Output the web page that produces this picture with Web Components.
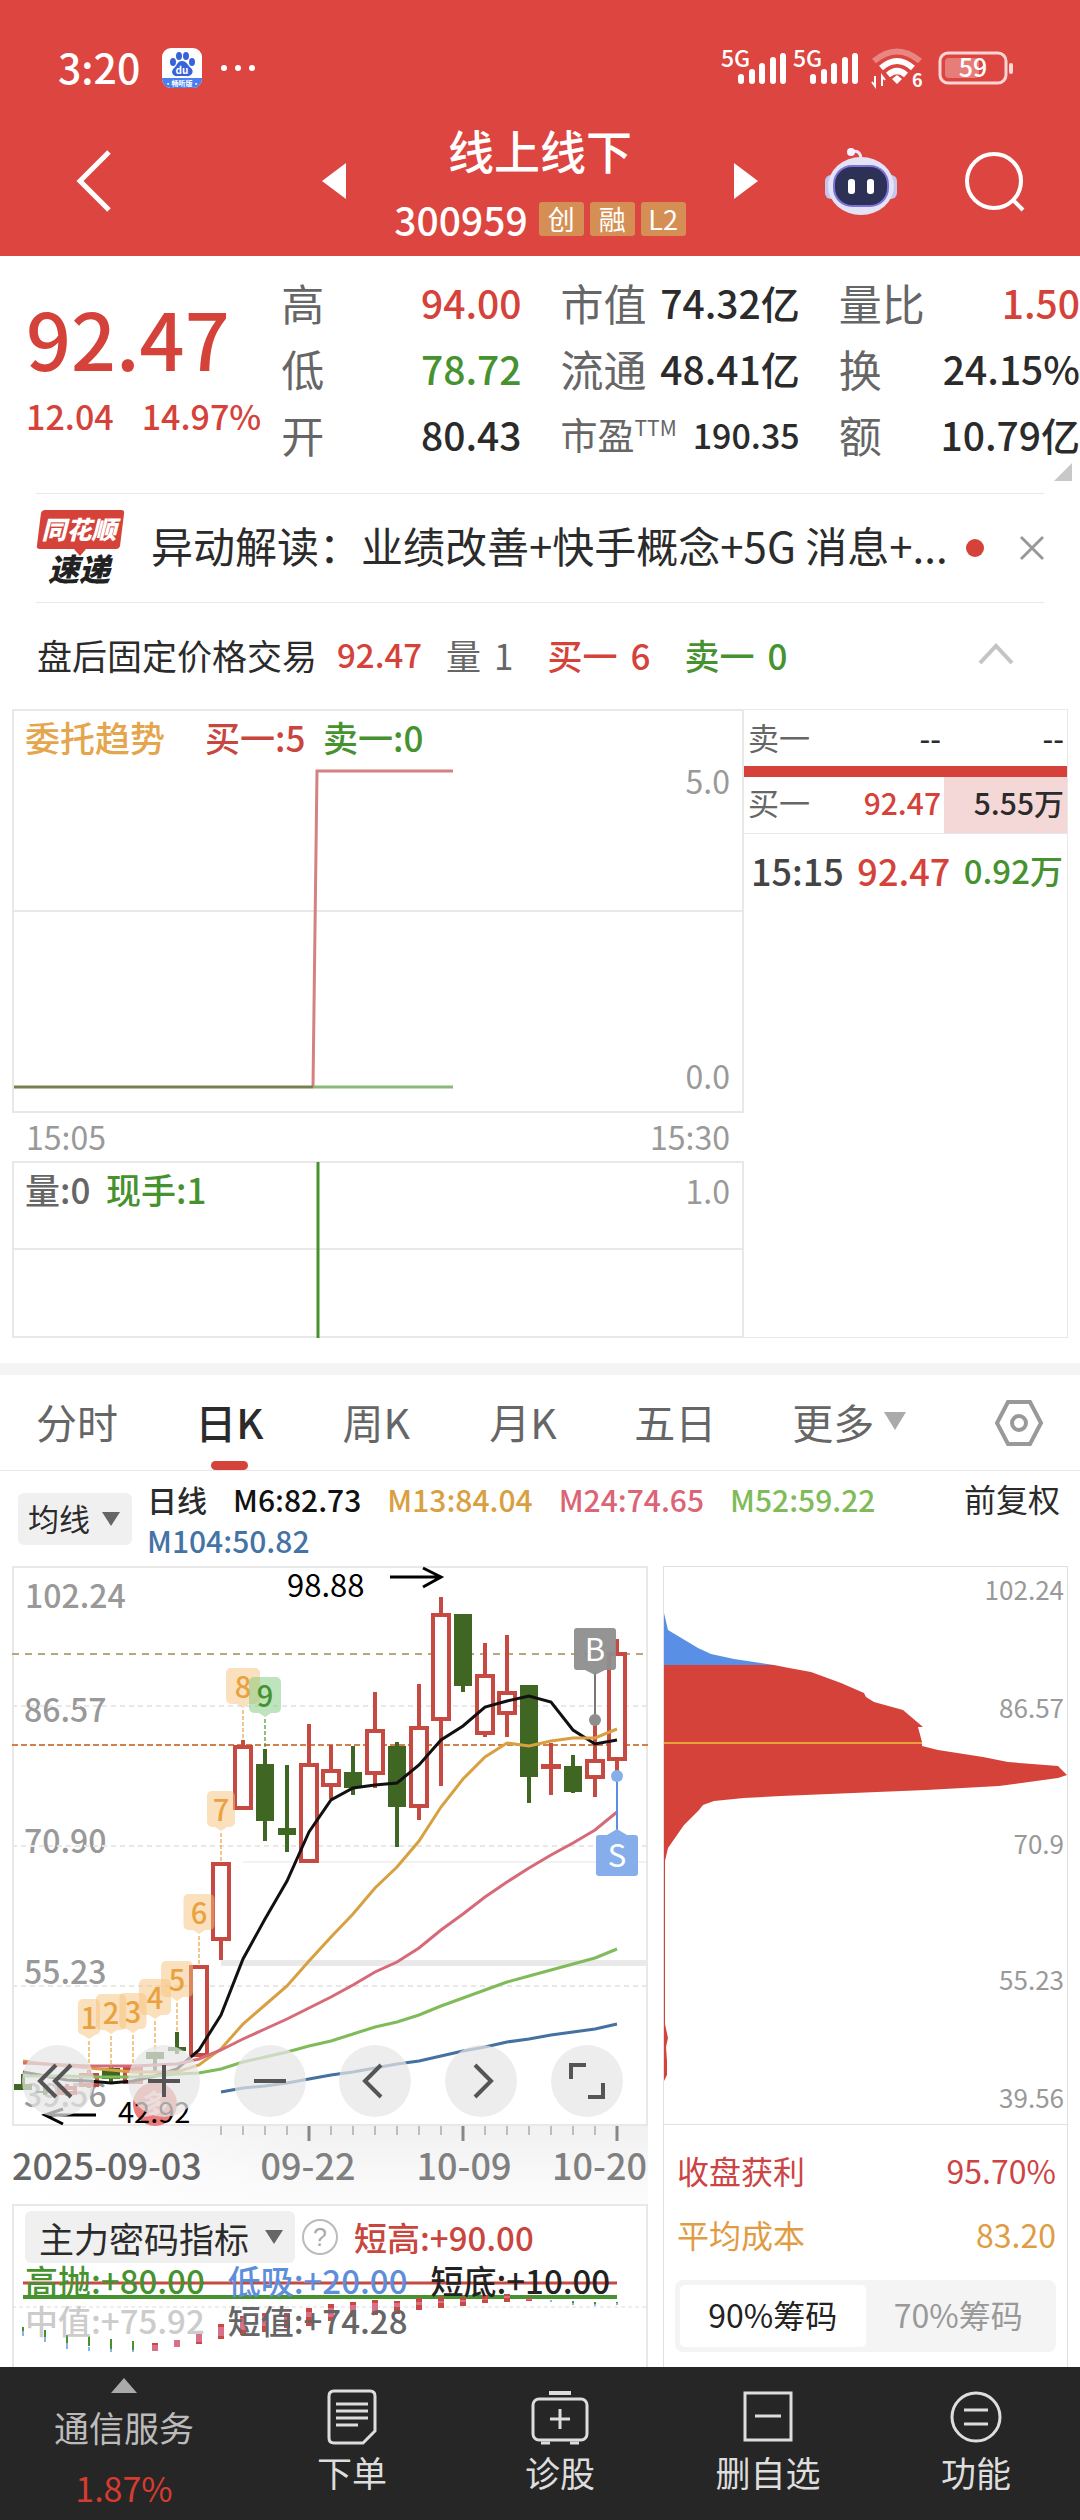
<!DOCTYPE html>
<html lang="zh-CN">
<head>
<meta charset="utf-8">
<meta name="viewport" content="width=device-width, initial-scale=1">
<title>线上线下 300959</title>
<style>
  body {
    margin: 0;
    min-height: 100vh;
    display: flex;
    flex-direction: column;
    background: #fff;
    color: #2b2b2b;
    font-family: "Noto Sans CJK SC", "Noto Sans", sans-serif;
    --red: #d5423a;
    --green: #45922f;
    --gray: #666;
    --line: #e8e8e8;
  }
  main { flex: 1; }
</style>
</head>
<body>
<status-bar time="3:20" battery="59"></status-bar>
<stock-nav name="线上线下" code="300959">
  <span slot="tag">创</span>
  <span slot="tag">融</span>
  <span slot="tag">L2</span>
</stock-nav>
<main>
  <quote-board price="92.47" change="12.04" percent="14.97%"></quote-board>
  <news-strip>异动解读：业绩改善+快手概念+5G 消息+...</news-strip>
  <after-hours></after-hours>
  <order-trend></order-trend>
  <period-tabs></period-tabs>
  <ma-legend></ma-legend>
  <chart-area>
    <k-chart></k-chart>
    <date-axis></date-axis>
    <indicator-chart></indicator-chart>
    <chip-panel slot="side"></chip-panel>
  </chart-area>
</main>
<bottom-nav>
  <bottom-item label="下单">
    <svg width="50" height="56" viewBox="0 0 50 56" fill="none" stroke="#ddd" stroke-width="3"><path d="M7 2H43Q48 2 48 7V42L36 54H7Q2 54 2 49V7Q2 2 7 2Z"/><path d="M9 15H41M9 22H41M9 29H41M9 36H31"/></svg>
  </bottom-item>
  <bottom-item label="诊股">
    <svg width="58" height="56" viewBox="0 0 58 56" fill="none" stroke="#ddd" stroke-width="3"><path d="M18 4H40" stroke-width="4"/><rect x="2" y="10" width="54" height="41" rx="6"/><path d="M29 20V40M19 30H39M10 54H19M39 54H48"/></svg>
  </bottom-item>
  <bottom-item label="删自选">
    <svg width="50" height="56" viewBox="0 0 50 56" fill="none" stroke="#ddd" stroke-width="3"><rect x="2" y="4" width="46" height="47"/><path d="M12 27H38"/></svg>
  </bottom-item>
  <bottom-item label="功能">
    <svg width="52" height="56" viewBox="0 0 52 56" fill="none" stroke="#ddd" stroke-width="3"><circle cx="26" cy="28" r="24"/><path d="M14 21H38M14 35H38"/></svg>
  </bottom-item>
</bottom-nav>

<script>
// registers an element whose shadow root is filled by render(host)
function define(name, render) {
  customElements.define(name, class extends HTMLElement {
    constructor() {
      super();
      this.attachShadow({ mode: "open" }).innerHTML = render(this);
    }
  });
}

const attr = (el, name) => el.getAttribute(name) || "";

define("status-bar", el => `
  <style>
    :host {
      display: flex; align-items: center; height: 40px; padding: 48px 66px 32px 58px;
      background: #dd4540; color: #fff;
    }
    time { font-size: 41px; font-weight: 500; line-height: 40px; padding-bottom: 4px; margin-right: 22px; }
    .more { margin-left: 18px; }
    .right { margin-left: auto; }
    svg { display: block; overflow: visible; }
  </style>
  <time>${attr(el, "time")}</time>
  <svg width="40" height="40" viewBox="0 0 40 40">
    <defs><clipPath id="app"><rect width="40" height="40" rx="9"/></clipPath></defs>
    <g clip-path="url(#app)">
      <rect width="40" height="40" fill="#fff"/>
      <rect y="30" width="40" height="10" fill="#4a80ee"/>
      <g fill="#3763d8">
        <ellipse cx="11" cy="14" rx="3" ry="4"/><ellipse cx="17" cy="8" rx="3" ry="4"/>
        <ellipse cx="24" cy="8" rx="3" ry="4"/><ellipse cx="30" cy="14" rx="3" ry="4"/>
        <path d="M20 13C25 13 26 18 29 20C33 24 29 29 24 28H16C11 29 8 24 12 20C15 18 15 13 20 13Z"/>
      </g>
      <text x="20" y="26" font-size="10" font-weight="700" fill="#fff" text-anchor="middle">du</text>
      <text x="20" y="38" font-size="7" font-weight="700" fill="#fff" text-anchor="middle">·畅听版·</text>
    </g>
  </svg>
  <svg class="more" width="36" height="40" fill="#fff"><circle cx="4" cy="20" r="3"/><circle cx="18" cy="20" r="3"/><circle cx="32" cy="20" r="3"/></svg>
  <svg class="right" width="293" height="40" viewBox="0 0 293 40" fill="#fff">
    ${[0, 72].map(x => `
      <text x="${x}" y="19" font-size="23" font-weight="500">5G</text>
      <path stroke="#fff" stroke-width="6" stroke-linecap="round" d="M${x + 20} 33V29M${x + 31} 33V24M${x + 41} 33V18M${x + 52} 33V12M${x + 62} 33V8"/>`).join("")}
    <g fill="none" stroke="#fff" stroke-width="6">
      <path d="M153 13Q176-6 199 13" opacity=".35"/>
      <path d="M160 20Q176 6 192 20"/>
      <path d="M167 27Q176 19 185 27"/>
    </g>
    <path d="M171 31L176 36L181 31L176 27Z"/>
    <path d="M154 28V38L151 34M161 38V28L164 32" fill="none" stroke="#fff" stroke-width="2"/>
    <text x="191" y="39" font-size="18" font-weight="700">6</text>
    <rect x="219" y="5" width="66" height="30" rx="8" fill="none" stroke="#fbd5d3" stroke-width="3"/>
    <rect x="224" y="10" width="34" height="20" rx="4" opacity=".3"/>
    <rect x="288" y="15" width="4" height="11" rx="2" opacity=".8"/>
    <text x="252" y="29" font-size="25" font-weight="500" text-anchor="middle">${attr(el, "battery")}</text>
  </svg>
`);

define("stock-nav", el => `
  <style>
    :host {
      display: grid; grid-template-columns: 1fr auto 1fr; align-items: center;
      height: 120px; padding: 0 54px 16px; background: #dd4540; color: #fff;
    }
    button { border: 0; padding: 0; background: none; display: block; }
    svg { display: block; }
    .left { display: flex; justify-content: space-between; align-items: center; padding: 0 48px 0 22px; }
    .right { display: flex; justify-content: space-between; align-items: center; padding-left: 48px; }
    .tools { display: flex; gap: 67px; align-items: center; }
    .center { display: flex; flex-direction: column; align-items: center; gap: 22px; padding-bottom: 4px; }
    h1 { margin: 0; font-size: 46px; font-weight: 500; line-height: 58px; }
    .code { display: flex; align-items: center; gap: 6px; font-size: 39px; font-weight: 500; line-height: 38px; }
    .code b { font-weight: 500; margin-right: 5px; }
    ::slotted(span) {
      background: #d58f55; border-radius: 3px; min-width: 45px; text-align: center;
      font-size: 27px; font-weight: 400; line-height: 34px;
    }
  </style>
  <div class="left">
    <button aria-label="返回"><svg width="36" height="64" fill="none" stroke="#fff" stroke-width="5"><path d="M33 3L4 32L33 61"/></svg></button>
    <button aria-label="上一只"><svg width="24" height="36" fill="#fff"><path d="M24 0V36L0 18Z"/></svg></button>
  </div>
  <div class="center">
    <h1>${attr(el, "name")}</h1>
    <div class="code"><b>${attr(el, "code")}</b><slot name="tag"></slot></div>
  </div>
  <div class="right">
    <button aria-label="下一只"><svg width="24" height="36" fill="#fff"><path d="M0 0V36L24 18Z"/></svg></button>
    <div class="tools">
      <button aria-label="智能助手">
        <svg width="72" height="68" viewBox="0 0 72 68">
          <path d="M26 5Q36 2 36 13" fill="none" stroke="#e8e6f6" stroke-width="3"/>
          <circle cx="26" cy="5" r="4" fill="#f4f2ff"/>
          <rect x="0" y="28" width="12" height="24" rx="6" fill="#c5c5ee"/>
          <rect x="60" y="28" width="12" height="24" rx="6" fill="#c5c5ee"/>
          <ellipse cx="36" cy="39" rx="33" ry="29" fill="#e4e3f6"/>
          <rect x="8" y="18" width="56" height="42" rx="19" fill="#7d72dc"/>
          <rect x="10" y="20" width="52" height="38" rx="17" fill="#2c3155"/>
          <rect x="23" y="32" width="7" height="15" rx="3" fill="#fff"/>
          <rect x="42" y="32" width="7" height="15" rx="3" fill="#fff"/>
        </svg>
      </button>
      <button aria-label="搜索"><svg width="62" height="62" fill="none" stroke="#fff" stroke-width="4"><circle cx="30" cy="31" r="27"/><path d="M49 50L59 60"/></svg></button>
    </div>
  </div>
`);

define("quote-board", el => `
  <style>
    :host {
      display: grid; grid-template-columns: 216fr 240fr 239fr 241fr; column-gap: 39px;
      padding: 13px 0 26px 26px; position: relative; color: #2b2b2b;
    }
    .last { color: var(--red); padding-top: 12px; min-width: 0; white-space: nowrap; }
    .price { font-size: 79px; font-weight: 500; line-height: 112px; }
    .chg { font-size: 34px; line-height: 46px; display: flex; gap: 28px; font-weight: 500; }
    dl { margin: 0; min-width: 0; }
    dl div { display: flex; justify-content: space-between; align-items: center; height: 66px; white-space: nowrap; }
    dt { font-size: 43px; color: var(--gray); }
    dt.s { font-size: 37px; display: flex; align-items: center; }
    sup { font-size: 21px; line-height: 20px; align-self: flex-start; padding-top: 10px; }
    dd { margin: 0; font-size: 39px; font-weight: 500; }
    dd.s { font-size: 34px; }
    .up { color: var(--red); }
    .down { color: var(--green); }
    .corner { position: absolute; right: 8px; bottom: 12px; }
  </style>
  <div class="last">
    <div class="price">${attr(el, "price")}</div>
    <div class="chg"><span>${attr(el, "change")}</span><span>${attr(el, "percent")}</span></div>
  </div>
  <dl>
    <div><dt>高</dt><dd class="up">94.00</dd></div>
    <div><dt>低</dt><dd class="down">78.72</dd></div>
    <div><dt>开</dt><dd>80.43</dd></div>
  </dl>
  <dl>
    <div><dt>市值</dt><dd>74.32亿</dd></div>
    <div><dt>流通</dt><dd>48.41亿</dd></div>
    <div><dt class="s">市盈<sup>TTM</sup></dt><dd class="s">190.35</dd></div>
  </dl>
  <dl>
    <div><dt>量比</dt><dd class="up">1.50</dd></div>
    <div><dt>换</dt><dd>24.15%</dd></div>
    <div><dt>额</dt><dd>10.79亿</dd></div>
  </dl>
  <svg class="corner" width="18" height="18"><path d="M18 0V18H0Z" fill="#c8c8c8"/></svg>
`);

define("news-strip", () => `
  <style>
    :host {
      display: flex; align-items: center; margin: 0 36px; height: 108px;
      border: solid var(--line); border-width: 1px 0;
    }
    a { flex: 1; color: #2b2b2b; text-decoration: none; font-size: 42px; line-height: 60px; padding-bottom: 6px; white-space: nowrap; margin-left: 25px; }
    button { border: 0; background: none; padding: 0; margin-left: 36px; }
    svg { display: block; overflow: visible; }
    i { width: 18px; height: 18px; border-radius: 50%; background: var(--red); }
  </style>
  <svg width="90" height="76" viewBox="0 0 90 76">
    <path d="M9 0H85Q89 0 88 4L84 36Q83 39 80 39H50L44 46L38 39H4Q0 39 1 35L5 3Q6 0 9 0Z" fill="#d5423a"/>
    <g font-weight="900" text-anchor="middle">
      <text x="43" y="29" font-size="25" font-style="italic" fill="#fff">同花顺</text>
      <text x="43" y="71" font-size="31" font-style="italic" fill="#222">速递</text>
    </g>
  </svg>
  <a href="#news"><slot></slot></a>
  <i></i>
  <button aria-label="关闭"><svg width="24" height="24" stroke="#999" stroke-width="3"><path d="M1 1L23 23M23 1L1 23"/></svg></button>
`);

define("after-hours", () => `
  <style>
    :host {
      display: flex; align-items: center; height: 102px; padding: 0 66px 4px 37px;
      font-size: 35px; white-space: nowrap;
    }
    b { font-size: 33px; font-weight: 500; color: var(--red); margin: 0 24px 0 20px; }
    span { display: flex; gap: 13px; }
    i { font-style: normal; }
    .vol { color: var(--gray); margin-right: 34px; }
    .buy { color: var(--red); margin-right: 34px; font-weight: 500; }
    .sell { color: var(--green); font-weight: 500; }
    button { margin-left: auto; border: 0; background: none; padding: 0; }
    svg { display: block; }
  </style>
  <span>盘后固定价格交易</span>
  <b>92.47</b>
  <span class="vol"><i>量</i>1</span>
  <span class="buy"><i>买一</i>6</span>
  <span class="sell"><i>卖一</i>0</span>
  <button aria-label="收起"><svg width="36" height="22" fill="none" stroke="#c4c4c4" stroke-width="4"><path d="M2 20L18 3L34 20"/></svg></button>
`);

define("order-trend", () => `
  <style>
    :host {
      display: grid; grid-template-columns: 732fr 324fr; padding: 0 12px 25px;
      border-bottom: 12px solid #f4f4f4;
    }
    svg { display: block; width: 100%; }
    .book { border: 1px solid var(--line); border-left: 0; }
    table { width: 100%; border-collapse: collapse; font-size: 30px; }
    td { padding: 0 3px 6px 4px; text-align: right; line-height: 50px; font-weight: 500; }
    tr:first-child td { padding-bottom: 2px; line-height: 54px; }
    td:first-child { text-align: left; color: var(--gray); font-size: 31px; font-weight: 400; }
    tr.bar td { padding: 0; height: 11px; line-height: 0; background: var(--red); }
    .pink { background: #f4d7d7; width: 116px; }
    .up { color: var(--red); }
    .deal {
      display: flex; justify-content: space-between; align-items: center; padding: 0 4px 0 7px; height: 72px;
      border-top: 1px solid var(--line); font-size: 36px; color: #444; font-weight: 500;
    }
    .deal small { font-size: 33px; color: var(--green); }
  </style>
  <svg viewBox="0 0 732 629">
    <g fill="none" stroke="#e8e8e8" stroke-width="2">
      <path d="M1 1H731V403H1ZM1 202H731M1 453H731V628H1ZM1 540H731"/>
    </g>
    <path d="M301 378H441" fill="none" stroke="#8bb87b" stroke-width="3"/>
    <path d="M301 378L305 62H441" fill="none" stroke="#d5817e" stroke-width="3"/>
    <path d="M2 378H301" stroke="#76814c" stroke-width="3"/>
    <path d="M306 453V629" stroke="#45922f" stroke-width="3"/>
    <g font-size="35" font-weight="500">
      <text x="13" y="43" fill="#e5a54c">委托趋势</text>
      <text x="193" y="43" fill="#c9463f">买一:5</text>
      <text x="311" y="43" fill="#45922f">卖一:0</text>
      <text x="13" y="495" fill="#666">量:0</text>
      <text x="94" y="495" fill="#45922f">现手:1</text>
    </g>
    <g font-size="32" fill="#999" text-anchor="end">
      <text x="718" y="85">5.0</text>
      <text x="718" y="380">0.0</text>
      <text x="718" y="441">15:30</text>
      <text x="718" y="495">1.0</text>
      <text x="14" y="441" text-anchor="start">15:05</text>
    </g>
  </svg>
  <div class="book">
    <table>
      <tr><td>卖一</td><td>--</td><td>--</td></tr>
      <tr class="bar"><td colspan="3"></td></tr>
      <tr><td>买一</td><td class="up">92.47</td><td class="pink">5.55万</td></tr>
    </table>
    <div class="deal"><span>15:15</span><span class="up">92.47</span><small>0.92万</small></div>
  </div>
`);

define("period-tabs", () => `
  <style>
    :host {
      display: flex; justify-content: space-between; align-items: center; height: 95px;
      padding: 0 36px; border-bottom: 1px solid var(--line);
    }
    button {
      position: relative; border: 0; background: none; padding: 0 0 4px; height: 95px; min-width: 71px; color: var(--gray);
      font: 400 41px/90px "Noto Sans CJK SC", sans-serif; display: flex; align-items: center; justify-content: center; gap: 10px;
    }
    button:last-child { margin-left: 12px; min-width: 0; padding: 0; }
    .on { color: #2b2b2b; font-weight: 500; }
    .on::after {
      content: ""; position: absolute; left: 17px; right: 17px; bottom: 0; height: 9px;
      border-radius: 5px; background: var(--red);
    }
  </style>
  <button>分时</button>
  <button class="on">日K</button>
  <button>周K</button>
  <button>月K</button>
  <button>五日</button>
  <button>更多<svg width="22" height="18" fill="#aaa"><path d="M0 0H22L11 18Z"/></svg></button>
  <button aria-label="设置"><svg width="50" height="48" fill="none" stroke="#999" stroke-width="4"><path d="M14 3H36L47 24L36 45H14L3 24Z"/><circle cx="25" cy="24" r="7"/></svg></button>
`);

const selectCss = `
  label { position: relative; display: flex; }
  select {
    appearance: none; border: 0; border-radius: 6px; background: #f0f0f0; color: #2b2b2b;
    font-family: "Noto Sans CJK SC", sans-serif;
  }
  label svg { position: absolute; right: 12px; top: 50%; margin-top: -7px; }
`;

define("ma-legend", () => `
  <style>
    ${selectCss}
    :host { display: flex; align-items: center; height: 95px; padding: 0 20px 0 18px; white-space: nowrap; }
    select { width: 114px; height: 52px; font-size: 31px; padding: 0 0 2px 10px; }
    p { flex: 1; margin: 0 0 0 15px; display: flex; flex-wrap: wrap; column-gap: 26px; font-size: 30px; line-height: 41px; font-weight: 500; align-self: flex-start; padding-top: 8px; }
    .adj { font-size: 32px; line-height: 41px; align-self: flex-start; padding-top: 7px; }
  </style>
  <label>
    <select aria-label="主图指标"><option>均线</option></select>
    <svg width="18" height="14" fill="#666"><path d="M0 0H18L9 14Z"/></svg>
  </label>
  <p>
    <span>日线</span>
    <span style="color:#111">M6:82.73</span>
    <span style="color:#d8a040">M13:84.04</span>
    <span style="color:#db6476">M24:74.65</span>
    <span style="color:#80bb5a">M52:59.22</span>
    <span style="color:#4473a5">M104:50.82</span>
  </p>
  <span class="adj">前复权</span>
`);

define("chart-area", () => `
  <style>
    :host { display: grid; grid-template-columns: 636fr 405fr; column-gap: 15px; padding: 0 12px; }
    .main { display: flex; flex-direction: column; }
  </style>
  <div class="main"><slot></slot></div>
  <slot name="side"></slot>
`);

// candles: [u|d, high, body top, body bottom, low], in chart pixels from the top
const candles = [
  ["d", 508, 518, 524, 524], ["d", 521, 525, 527, 529], ["u", 518, 521, 528, 530], ["u", 504, 508, 520, 522],
  ["d", 501, 502, 513, 516], ["u", 500, 502, 517, 518], ["d", 486, 486, 493, 506], ["d", 466, 481, 485, 488],
  ["u", 400, 400, 490, 490], ["u", 297, 297, 374, 394], ["u", 174, 180, 243, 243], ["d", 183, 198, 255, 275],
  ["d", 199, 262, 269, 286], ["u", 158, 198, 296, 296], ["u", 179, 204, 220, 233], ["d", 180, 206, 222, 229],
  ["u", 126, 164, 208, 222], ["d", 176, 180, 241, 281], ["u", 118, 161, 241, 254], ["u", 31, 48, 154, 220],
  ["d", 48, 48, 120, 126], ["u", 77, 109, 168, 171], ["u", 69, 126, 148, 171], ["d", 119, 119, 211, 237],
  ["u", 177, 199, 202, 229], ["d", 189, 200, 226, 227], ["u", 154, 194, 212, 231], ["u", 73, 87, 194, 209]
];

const averages = [
  ["#111", 0, [506, 510, 514, 515, 517, 515, 510, 503, 484, 449, 393, 353, 315, 266, 234, 222, 219, 217, 199, 174, 160, 141, 135, 130, 136, 164, 178, 174]],
  ["#d8a040", 0, [495, 498, 500, 502, 504, 506, 506, 506, 499, 483, 458, 439, 420, 395, 371, 348, 322, 301, 275, 241, 213, 191, 177, 180, 175, 172, 172, 163]],
  ["#d66a78", 0, [497, 498, 499, 500, 500, 500, 499, 498, 493, 484, 473, 463, 453, 442, 431, 419, 406, 396, 382, 364, 348, 331, 316, 302, 289, 277, 264, 246]],
  ["#80bb5a", 0, [510, 510, 510, 511, 511, 511, 510, 508, 507, 503, 496, 491, 486, 480, 475, 468, 461, 456, 449, 440, 432, 424, 416, 410, 404, 398, 392, 383]],
  ["#44719f", 9, [526, 522, 520, 517, 513, 509, 506, 502, 498, 495, 490, 485, 481, 476, 473, 469, 466, 463, 458]]
];

const cx = i => 11 + i * 22;

function candle([kind, high, top, bottom, low], i) {
  const x = cx(i);
  const color = kind === "u" ? "#c64a42" : "#3f6623";
  const body = kind === "u"
    ? `<rect x="${x - 8}" y="${top + 1}" width="16" height="${Math.max(bottom - top - 2, 1)}" fill="#fff" stroke="${color}" stroke-width="4"/>`
    : `<rect x="${x - 9}" y="${top}" width="18" height="${bottom - top}" fill="${color}"/>`;
  return `<path d="M${x} ${high}V${low}" stroke="${color}" stroke-width="4"/>${body}`;
}

// numbered markers: [text, candle, box top, box width, line end]
const marks = [
  [1, 3, 433, 22, 508], [2, 4, 428, 30, 502], [3, 5, 427, 27, 502], [4, 6, 413, 32, 486], [5, 7, 395, 32, 466],
  [6, 8, 328, 31, 400], [7, 9, 225, 28, 297], [8, 10, 102, 34, 174], [9, 11, 111, 32, 183]
];

function mark([n, i, y, w, end]) {
  const x = cx(i);
  const color = n === 9 ? "#45922f" : "#e9a23f";
  const fill = n === 9 ? "#7fc87a" : "#f5c27a";
  return `
    <g fill="${fill}" fill-opacity=".5">
      <rect x="${x - w / 2}" y="${y}" width="${w}" height="36" rx="5"/>
      <path d="M${x - 6} ${y + 36}H${x + 6}L${x} ${y + 40}Z"/>
    </g>
    <path d="M${x} ${y + 42}V${end}" stroke="${color}" stroke-opacity=".6" stroke-width="2" stroke-dasharray="4 2"/>
    <text x="${x}" y="${y + 30}" font-size="29" font-weight="500" fill="${color}" text-anchor="middle">${n}</text>`;
}

define("k-chart", () => `
  <style>
    :host { display: block; position: relative; }
    svg { display: block; width: 100%; overflow: visible; }
    nav { position: absolute; left: 10px; right: 25px; bottom: 9px; display: flex; justify-content: space-between; }
    button { width: 72px; height: 72px; padding: 0; border: 0; border-radius: 50%; background: rgba(230, 230, 230, .72); }
    button svg { width: 72px; height: 72px; fill: none; stroke: #555; stroke-width: 4; }
  </style>
  <svg viewBox="0 0 636 560">
    <g font-size="32" fill="#999" font-weight="500">
      <text x="13" y="42">102.24</text><text x="12" y="156">86.57</text><text x="12" y="287">70.90</text>
      <text x="12" y="418">55.23</text><text x="12" y="541">39.56</text>
    </g>
    <path d="M1 1H635V559H1Z" fill="none" stroke="#e8e8e8" stroke-width="2"/>
    <path d="M0 140H636M0 280H636M0 420H636" stroke="#e8e8e8" stroke-width="2" stroke-dasharray="5 4"/>
    <path d="M231 296H636" stroke="#e5e5e5"/>
    <path d="M209 397H636" stroke="#e9e9e9" stroke-width="6"/>
    <path d="M0 88H636" stroke="#b9a67e" stroke-width="2" stroke-dasharray="7 6"/>
    <path d="M0 179H636" stroke="#d0824a" stroke-width="2" stroke-dasharray="6 3"/>
    ${candles.map(candle).join("")}
    ${averages.map(([color, from, ys]) => `<polyline points="${ys.map((y, i) => `${cx(from + i)},${y}`).join(" ")}" fill="none" stroke="${color}" stroke-width="3"/>`).join("")}
    ${marks.map(mark).join("")}
    <circle cx="143" cy="538" r="22" fill="#ea7d7c"/>
    <text x="143" y="548" font-size="27" font-weight="700" fill="#f7c6c4" text-anchor="middle">多</text>
    <g fill="none" stroke="#000" stroke-width="3">
      <path d="M378 11H428M411 2L429 11L411 21M84 549H34M51 558L33 549L51 543"/>
    </g>
    <text x="275" y="31" font-size="31" fill="#000">98.88</text>
    <text x="106" y="557" font-size="29" fill="#000">42.92</text>
    <path d="M583 106V154" stroke="#777" stroke-width="2"/>
    <circle cx="583" cy="154" r="6" fill="#8e8e8e"/>
    <path d="M565 62H601Q604 62 604 65V101Q604 104 601 104H593L583 109L573 104H565Q562 104 562 101V65Q562 62 565 62Z" fill="#8e8e8e" fill-opacity=".95"/>
    <path d="M605 210V266" stroke="#5b8fdd" stroke-width="2"/>
    <circle cx="605" cy="210" r="6" fill="#86aeea"/>
    <path d="M587 269H595L605 263L615 269H623Q626 269 626 272V307Q626 310 623 310H587Q584 310 584 307V272Q584 269 587 269Z" fill="#86aeea"/>
    <g font-size="31" fill="#fff" text-anchor="middle"><text x="583" y="95">B</text><text x="605" y="301">S</text></g>
  </svg>
  <nav>
    <button aria-label="最早"><svg viewBox="0 0 72 72"><path d="M34 20L18 36L34 52M49 20L33 36L49 52"/></svg></button>
    <button aria-label="放大"><svg viewBox="0 0 72 72"><path d="M36 20V52M20 36H52"/></svg></button>
    <button aria-label="缩小"><svg viewBox="0 0 72 72"><path d="M20 36H52"/></svg></button>
    <button aria-label="左移"><svg viewBox="0 0 72 72"><path d="M42 20L26 36L42 52"/></svg></button>
    <button aria-label="右移"><svg viewBox="0 0 72 72"><path d="M30 20L46 36L30 52"/></svg></button>
    <button aria-label="全屏"><svg viewBox="0 0 72 72"><path d="M20 34V20H35M52 38V52H37"/></svg></button>
  </nav>
`);

define("date-axis", () => `
  <style>
    :host { display: block; background: linear-gradient(#f1f1f1, #fcfcfc); }
    svg { display: block; width: 100%; }
  </style>
  <svg viewBox="0 0 636 78">
    <defs><linearGradient id="fade"><stop stop-color="#fff"/><stop offset="1" stop-color="#fff" stop-opacity="0"/></linearGradient></defs>
    <rect width="300" height="78" fill="url(#fade)"/>
    ${Array.from({ length: 19 }, (_, n) => {
      const long = n % 7 === 4;
      return `<path d="M${cx(9 + n)} 0V${long ? 15 : 9}" stroke="#888" stroke-width="${long ? 3 : 1}"/>`;
    }).join("")}
    <g font-size="36" fill="#808080" font-weight="500" text-anchor="middle">
      <text x="0" y="54" fill="#666" text-anchor="start">2025-09-03</text>
      <text x="296" y="54">09-22</text>
      <text x="452" y="54">10-09</text>
      <text x="635" y="54" text-anchor="end">10-20</text>
    </g>
  </svg>
`);

// indicator bars: [green or red part, blue or pink part] as top/bottom pairs
const sticks = [
  [123, 127, 127, 132], [126, 133, 133, 138], [131, 139, 139, 145], [132, 142, 143, 147], [135, 145, 145, 148], [137, 146, 146, 148],
  [139, 141, 141, 147], [136, 136, 136, 143], [129, 140, 130, 138], [120, 135, 123, 132], [112, 131, 114, 126], [109, 128, 112, 122],
  [109, 124, 113, 118], [104, 122, 108, 113], [100, 117, 104, 113], [98, 113, 101, 109], [96, 111, 99, 107], [97, 110, 99, 103],
  [94, 106, 98, 101], [93, 104, 97, 99], [93, 102, 96, 98], [91, 99, 95, 96], [90, 98, 92, 94], [94, 97, 95, 96],
  [96, 97, 96, 98], [97, 99, 99, 101], [98, 100, 100, 102], [98, 99, 99, 101]
];

function stick([a, b, c, d], i) {
  const x = cx(i);
  const thin = i < 6 || i > 23;
  const w = thin ? 2 : 6;
  return `
    <rect x="${x - w / 2}" y="${a}" width="${w}" height="${b - a}" fill="${thin ? "#45922f" : "#c64a42"}"/>
    <rect x="${x - w / 2}" y="${c}" width="${w}" height="${d - c}" fill="${thin ? "#8ab2e4" : "#d8708a"}"/>`;
}

define("indicator-chart", () => `
  <style>
    ${selectCss}
    :host { display: block; position: relative; }
    svg { display: block; }
    .plot { width: 100%; }
    .legend {
      position: absolute; top: 10px; left: 13px; right: 12px; display: flex; flex-wrap: wrap;
      align-items: center; column-gap: 23px; font-size: 33px; line-height: 40px; font-weight: 500; white-space: nowrap;
    }
    .head { display: flex; align-items: center; width: 100%; height: 46px; }
    select { width: 270px; height: 52px; font-size: 35px; padding: 0 0 0 14px; }
    button {
      width: 36px; height: 36px; box-sizing: border-box; border: 2px solid #bbb; border-radius: 50%;
      background: #fff; color: #aaa; font-size: 25px; line-height: 30px; padding: 0; margin: 0 16px 0 7px;
    }
  </style>
  <svg class="plot" viewBox="0 0 636 163">
    <path d="M1 163V1H635V163" fill="none" stroke="#e8e8e8" stroke-width="2"/>
    <path d="M0 103H636" stroke="#ddd" stroke-dasharray="4 3"/>
    <path d="M11 79H605" stroke="#c64a42" stroke-width="3"/>
    <path d="M11 93H605" stroke="#45922f" stroke-width="4"/>
    ${sticks.map(stick).join("")}
  </svg>
  <div class="legend">
    <div class="head">
      <label>
        <select aria-label="副图指标"><option>主力密码指标</option></select>
        <svg width="18" height="14" fill="#666"><path d="M0 0H18L9 14Z"/></svg>
      </label>
      <button aria-label="指标说明">?</button>
      <span style="color:#c9463f">短高:+90.00</span>
    </div>
    <span style="color:#45922f">高抛:+80.00</span>
    <span style="color:#5e8edb">低吸:+20.00</span>
    <span style="color:#222">短底:+10.00</span>
    <span style="color:#ccc">中值:+75.92</span>
    <span style="color:#666">短值:+74.28</span>
  </div>
`);

define("chip-panel", () => `
  <style>
    :host { display: block; border: solid #e0e0e0; border-width: 1px 1px 0; }
    svg { display: block; width: 100%; border-bottom: 1px solid #e0e0e0; }
    dl { margin: 0; padding: 13px 11px 0 13px; font-size: 32px; }
    dl div { display: flex; justify-content: space-between; line-height: 64px; }
    dd { margin: 0; }
    .seg { display: grid; grid-template-columns: 1fr 1fr; margin: 14px 11px 0; padding: 5px; border-radius: 8px; background: #f4f4f4; }
    button {
      border: 0; border-radius: 5px; background: none; padding: 0 0 4px; color: #999; white-space: nowrap;
      font: 32px/58px "Noto Sans CJK SC", sans-serif;
    }
    .on { background: #fff; color: #222; }
  </style>
  <svg viewBox="0 0 403 557">
    <path d="M0 46L4 63L34 81L47 87L70 92L110 98H0Z" fill="#5a8fe6"/>
    <path d="M0 98H110L125 101L147 105L177 116L200 126L202 130L210 135L239 143L259 160H254L258 175V179L274 183L319 190L344 195L394 199L403 208L394 211L335 219L262 223L189 226L117 229L80 231L50 234L39 238L35 243L20 258L4 281L1 294V457L4 471L2 480L3 494V508L0 514Z" fill="#d5423a"/>
    <path d="M0 176H258" stroke="#e9a23f" stroke-width="2"/>
    <g font-size="26" fill="#999" text-anchor="end">
      <text x="400" y="33">102.24</text><text x="400" y="151">86.57</text><text x="400" y="287">70.9</text>
      <text x="400" y="423">55.23</text><text x="400" y="541">39.56</text>
    </g>
  </svg>
  <dl>
    <div style="color:#cd4444"><dt>收盘获利</dt><dd>95.70%</dd></div>
    <div style="color:#df9c44"><dt>平均成本</dt><dd>83.20</dd></div>
  </dl>
  <div class="seg"><button class="on">90%筹码</button><button>70%筹码</button></div>
`);

define("bottom-nav", () => `
  <style>
    :host {
      display: grid; grid-template-columns: 248fr repeat(4, 208fr); height: 153px;
      background: #262626; color: #ddd; font-size: 35px;
    }
    a { color: #bbb; text-decoration: none; display: flex; flex-direction: column; align-items: center; padding-top: 11px; }
    span { line-height: 48px; margin-top: 10px; }
    b { font-weight: 400; color: #d63b30; font-size: 34px; line-height: 40px; margin-top: 17px; }
  </style>
  <a href="#index"><svg width="26" height="15" fill="#aaa"><path d="M13 0L26 15H0Z"/></svg><span>通信服务</span><b>1.87%</b></a>
  <slot></slot>
`);

define("bottom-item", el => `
  <style>
    :host { display: block; }
    button {
      width: 100%; border: 0; background: none; color: #ddd; padding: 22px 0 0;
      font: 35px/50px "Noto Sans CJK SC", sans-serif; display: flex; flex-direction: column; align-items: center; gap: 2px;
    }
  </style>
  <button><slot></slot>${attr(el, "label")}</button>
`);
</script>
</body>
</html>
